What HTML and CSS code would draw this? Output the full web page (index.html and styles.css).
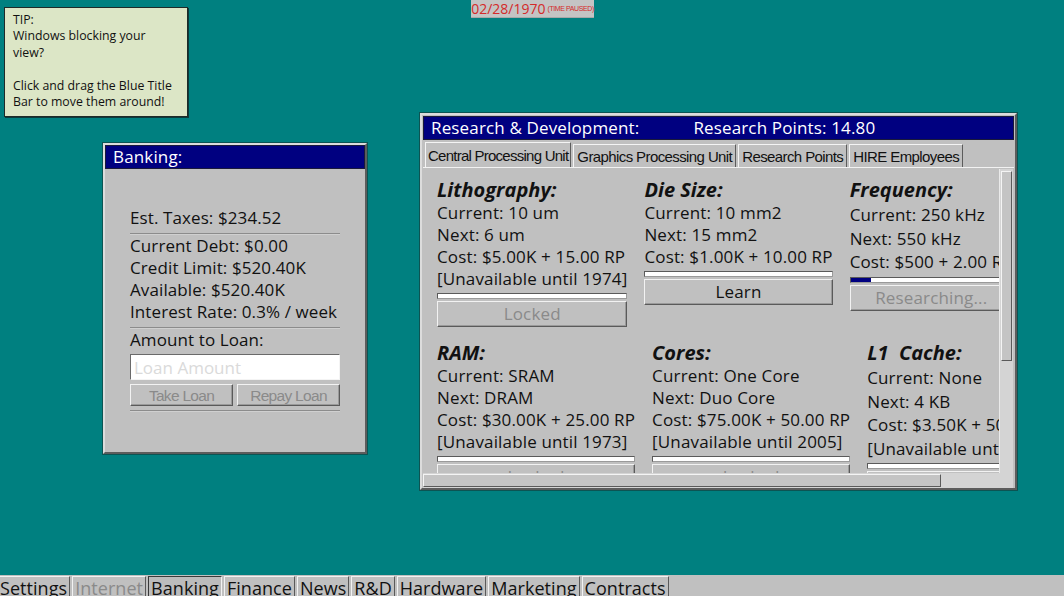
FILE: index.html
```html
<!DOCTYPE html>
<html>
<head>
	<title>Desktop</title>
	<link rel="stylesheet" href="styles.css">
</head>
<body>
	<div class="desktop">
		<div class="tip">
			TIP:<br>
			Windows blocking your<br>
			view?<br>
			<br>
			Click and drag the Blue Title<br>
			Bar to move them around!
		</div>

		<div class="clock">
			<span class="date">02/28/1970</span>
			<span class="paused">(TIME PAUSED)</span>
		</div>

		<div class="window banking">
			<div class="titlebar">Banking:</div>
			<div class="bank-body">
				<p>Est. Taxes: $234.52</p>
				<hr>
				<p>Current Debt: $0.00</p>
				<p>Credit Limit: $520.40K</p>
				<p>Available: $520.40K</p>
				<p>Interest Rate: 0.3% / week</p>
				<hr>
				<p>Amount to Loan:</p>
				<input class="loan-input" type="text" placeholder="Loan Amount">
				<div class="bank-buttons">
					<button class="btn narrow" disabled>Take Loan</button>
					<button class="btn narrow" disabled>Repay Loan</button>
				</div>
				<hr>
			</div>
		</div>

		<div class="window research">
			<div class="titlebar">
				<span>Research &amp; Development:</span>
				<span class="points">Research Points: 14.80</span>
			</div>
			<div class="tabs">
				<div class="tab active">Central Processing Unit</div>
				<div class="tab">Graphics Processing Unit</div>
				<div class="tab">Research Points</div>
				<div class="tab">HIRE Employees</div>
			</div>
			<div class="panel">
				<div class="viewport">
					<div class="row">
						<div class="item">
							<h3>Lithography:</h3>
							<p>Current: 10 um</p>
							<p>Next: 6 um</p>
							<p>Cost: $5.00K + 15.00 RP</p>
							<p>[Unavailable until 1974]</p>
							<div class="progress"></div>
							<button class="btn" disabled>Locked</button>
						</div>
						<div class="item">
							<h3>Die Size:</h3>
							<p>Current: 10 mm2</p>
							<p>Next: 15 mm2</p>
							<p>Cost: $1.00K + 10.00 RP</p>
							<div class="progress"></div>
							<button class="btn">Learn</button>
						</div>
						<div class="item tall">
							<h3>Frequency:</h3>
							<p>Current: 250 kHz</p>
							<p>Next: 550 kHz</p>
							<p>Cost: $500 + 2.00 RP</p>
							<div class="progress"><div class="fill" style="width: 20px"></div></div>
							<button class="btn" disabled>Researching...</button>
						</div>
					</div>
					<div class="row">
						<div class="item">
							<h3>RAM:</h3>
							<p>Current: SRAM</p>
							<p>Next: DRAM</p>
							<p>Cost: $30.00K + 25.00 RP</p>
							<p>[Unavailable until 1973]</p>
							<div class="progress"></div>
							<button class="btn" disabled>Locked</button>
						</div>
						<div class="item">
							<h3>Cores:</h3>
							<p>Current: One Core</p>
							<p>Next: Duo Core</p>
							<p>Cost: $75.00K + 50.00 RP</p>
							<p>[Unavailable until 2005]</p>
							<div class="progress"></div>
							<button class="btn" disabled>Locked</button>
						</div>
						<div class="item tall">
							<h3>L1&nbsp; Cache:</h3>
							<p>Current: None</p>
							<p>Next: 4 KB</p>
							<p>Cost: $3.50K + 50.00 RP</p>
							<p>[Unavailable until 1971]</p>
							<div class="progress"></div>
							<button class="btn" disabled>Locked</button>
						</div>
					</div>
				</div>
				<div class="vscroll"><div class="thumb"></div></div>
				<div class="hscroll"><div class="thumb"></div></div>
				<div class="corner"></div>
			</div>
		</div>
	</div>

	<div class="taskbar">
		<button class="task">Settings</button>
		<button class="task" disabled>Internet</button>
		<button class="task pressed">Banking</button>
		<button class="task">Finance</button>
		<button class="task">News</button>
		<button class="task">R&amp;D</button>
		<button class="task">Hardware</button>
		<button class="task">Marketing</button>
		<button class="task">Contracts</button>
	</div>
</body>
</html>
```

FILE: styles.css
```css
body {
	margin: 0;
	height: 596px;
	overflow: hidden;
	background: #008080;
	font-family: "Open Sans", sans-serif;
	display: flex;
	flex-direction: column;
}

p {
	margin: 0;
}

.desktop {
	position: relative;
	height: 575px;
	flex: none;
}

/* tip note */
.tip {
	position: absolute;
	left: 4px;
	top: 7px;
	width: 167px;
	height: 97px;
	padding: 4px 7px 7px 8px;
	background: #dce6c6;
	border: 1px solid #1e2a28;
	box-shadow: 1px 1px 0 #0b3b3a;
	font-size: 12.3px;
	line-height: 16.4px;
	color: #111;
}

/* clock */
.clock {
	position: absolute;
	left: 471px;
	top: 0;
	width: 123px;
	height: 17px;
	background: #c4c4c4;
	border-bottom: 1px solid #a8a8a8;
	display: flex;
	align-items: center;
	justify-content: center;
	gap: 2px;
	color: #d42a2a;
	white-space: nowrap;
}

.clock .date {
	font-size: 14px;
	line-height: 17px;
}

.clock .paused {
	font-size: 7px;
	letter-spacing: -0.4px;
	font-family: "Liberation Sans", sans-serif;
}

/* windows */
.window {
	position: absolute;
	background: #c0c0c0;
	border: 2px solid;
	border-color: #dcdcdc #5c5c5c #5c5c5c #dcdcdc;
	box-shadow: 0 0 0 1px #0c5453;
	box-sizing: border-box;
}

.titlebar {
	background: #000080;
	color: #fff;
	height: 22px;
	line-height: 22px;
	font-size: 17px;
	letter-spacing: 0.15px;
	padding-left: 7px;
	border: 1px solid #1a1a3a;
}

.banking {
	left: 103px;
	top: 143px;
	width: 264px;
	height: 311px;
}

.bank-body {
	padding: 38px 25px 0 25px;
	font-size: 17px;
	letter-spacing: 0.1px;
	line-height: 22px;
	color: #111;
}

.bank-body hr {
	border: none;
	border-top: 1px solid #8c8c8c;
	border-bottom: 1px solid #d0d0d0;
	margin: 4px 0 0 0;
}

.loan-input {
	display: block;
	width: 210px;
	height: 26px;
	margin-top: 3px;
	box-sizing: border-box;
	border: 1px solid;
	border-color: #6a6a6a #f4f4f4 #f4f4f4 #6a6a6a;
	background: #fff;
	font-family: "Open Sans", sans-serif;
	font-size: 17px;
	padding: 0 3px;
}

.loan-input::placeholder {
	color: #dadada;
}

.bank-buttons {
	display: flex;
	gap: 4px;
	margin-top: 4px;
}

.bank-buttons .btn {
	flex: 1;
	height: 22px;
}

.btn {
	display: block;
	background: #c0c0c0;
	border: 1px solid;
	border-color: #f2f2f2 #5a5a5a #5a5a5a #f2f2f2;
	box-shadow: inset -1px -1px 0 #9a9a9a;
	font-family: "Open Sans", sans-serif;
	font-size: 17px;
	letter-spacing: 0.15px;
	color: #111;
	height: 26px;
	width: 100%;
	padding: 0;
	line-height: 22px;
}

.btn:disabled {
	color: #8a8a8a;
}

.btn.narrow {
	font-family: "Liberation Sans", sans-serif;
	font-size: 15.5px;
	letter-spacing: -0.7px;
}

/* research window */
.research {
	left: 420px;
	top: 113px;
	width: 597px;
	height: 377px;
	padding: 1px;
}

.research .titlebar {
	display: flex;
}

.research .points {
	margin-left: 54px;
}

.tabs {
	display: flex;
	gap: 2px;
	padding: 2px 0 0 2px;
	height: 25px;
	border-bottom: 1px solid #f2f2f2;
	align-items: flex-end;
}

.tab {
	height: 22px;
	padding: 0 3px;
	border: 1px solid;
	border-bottom: none;
	border-color: #f4f4f4 #5c5c5c #5c5c5c #f4f4f4;
	font-family: "Liberation Sans", sans-serif;
	font-size: 15px;
	letter-spacing: -0.6px;
	line-height: 23px;
	color: #111;
}

.tab.active {
	height: 24px;
	line-height: 26px;
	padding: 0 2px;
	letter-spacing: -0.75px;
}

.panel {
	display: grid;
	grid-template-columns: 576px 14px;
	grid-template-rows: 304px 15px;
	margin-top: 1px;
}

.viewport {
	overflow: hidden;
	padding: 8px 0 0 14px;
	box-sizing: border-box;
}

.row {
	display: flex;
	gap: 17px;
	margin-bottom: 13px;
}

.item {
	flex: none;
	font-size: 17px;
	letter-spacing: 0.15px;
	line-height: 22px;
	color: #111;
}

.item h3 {
	margin: 0;
	font-size: 20px;
	font-style: italic;
	font-weight: bold;
	letter-spacing: 0;
	line-height: 25px;
}

.item.tall h3 {
	margin-bottom: 1px;
}

.item.tall p {
	line-height: 23.5px;
}

.item.tall .progress {
	margin-top: 3px;
}

.progress {
	height: 4px;
	margin: 3px 0 2px;
	background: #fff;
	border: 1px solid #5a5a5a;
	border-right-color: #9a9a9a;
	border-bottom-color: #9a9a9a;
}

.progress .fill {
	height: 4px;
	background: #000080;
}

.vscroll {
	background: #d4d4d4;
	border-left: 1px solid #eaeaea;
	padding: 2px 1px 0 1px;
}

.vscroll .thumb {
	height: 190px;
	background: #c4c4c4;
	border: 1px solid;
	border-color: #f4f4f4 #5a5a5a #5a5a5a #f4f4f4;
	box-sizing: border-box;
}

.hscroll {
	background: #d4d4d4;
	padding: 1px 58px 1px 0;
}

.hscroll .thumb {
	height: 13px;
	background: #c4c4c4;
	border: 1px solid;
	border-color: #f4f4f4 #5a5a5a #5a5a5a #f4f4f4;
	box-sizing: border-box;
}

.corner {
	background: #d4d4d4;
}

/* taskbar */
.taskbar {
	flex: 1;
	background: #c0c0c0;
	display: flex;
	gap: 2px;
	margin-left: -3px;
	padding-top: 1px;
	align-items: flex-start;
}

.task {
	background: #c0c0c0;
	border: 1px solid;
	border-color: #f2f2f2 #5a5a5a #5a5a5a #f2f2f2;
	font-family: "Open Sans", sans-serif;
	font-size: 18px;
	letter-spacing: 0.05px;
	line-height: 22px;
	height: 24px;
	padding: 0 2px;
	color: #111;
}

.task:disabled {
	color: #8a8a8a;
}

.task.pressed {
	border-color: #3a3a3a #f2f2f2 #f2f2f2 #3a3a3a;
	background: #bcbcbc;
}
```
